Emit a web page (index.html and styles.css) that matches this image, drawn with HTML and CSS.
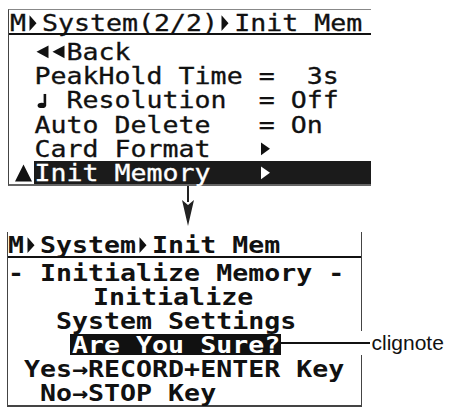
FILE: index.html
```html
<!DOCTYPE html>
<html>
<head>
<meta charset="utf-8">
<link rel="stylesheet" href="styles.css">
</head>
<body>
<div class="page">
  <div class="lcd lcd-top">
    <div class="hdr"><span class="t">M<svg class="g" viewBox="0 0 16 24"><polygon points="3.5,1 10.5,10 3.5,19"/></svg>System(2/2)<svg class="g" viewBox="0 0 16 24"><polygon points="3.5,1 10.5,10 3.5,19"/></svg>Init Mem</span></div>
    <div class="rows">
      <div class="row"><span class="cur"></span><span class="txt"><span class="t"><svg class="g" viewBox="0 0 16 24"><polygon points="1.5,9.7 13.5,2.5 13.5,17"/></svg><svg class="g" viewBox="0 0 16 24"><polygon points="1.5,9.7 13.5,2.5 13.5,17"/></svg>Back</span></span></div>
      <div class="row"><span class="cur"></span><span class="txt"><span class="t">PeakHold Time =  3s</span></span></div>
      <div class="row"><span class="cur"></span><span class="txt"><span class="t"><svg class="g" viewBox="0 0 16 24"><rect x="8.6" y="3" width="2.6" height="13.5"/><ellipse cx="6.8" cy="16" rx="4.2" ry="3"/></svg> Resolution  = Off</span></span></div>
      <div class="row"><span class="cur"></span><span class="txt"><span class="t">Auto Delete   = On</span></span></div>
      <div class="row"><span class="cur"></span><span class="txt"><span class="t">Card Format   <svg class="g" viewBox="0 0 16 24"><polygon points="2,2.5 11,9.7 2,17"/></svg></span></span></div>
      <div class="row sel"><span class="cur"><svg class="up" viewBox="0 0 18 18"><polygon points="9,0 18,18 0,18"/></svg></span><span class="txt"><span class="t">Init Memory   <svg class="g" viewBox="0 0 16 24"><polygon points="2,2.5 11,9.7 2,17"/></svg></span></span></div>
    </div>
  </div>
  <div class="arrow">
    <svg viewBox="0 0 12 44" width="12" height="44"><rect x="5" y="0" width="2" height="16"/><polygon points="0,14 6,40 12,14 6,19"/></svg>
  </div>
  <div class="lcd lcd-bot">
    <div class="hdr"><span class="t">M<svg class="g" viewBox="0 0 16 24"><polygon points="3.5,1 10.5,10 3.5,19"/></svg>System<svg class="g" viewBox="0 0 16 24"><polygon points="3.5,1 10.5,10 3.5,19"/></svg>Init Mem</span></div>
    <div class="rows">
      <div class="line"><span class="t">- Initialize Memory -</span></div>
      <div class="line nudge"><span class="t">     Initialize</span></div>
      <div class="line"><span class="t">   System Settings</span></div>
      <div class="line callrow"><span class="t">    </span><span class="hl"><span class="t">Are You Sure?</span></span><span class="callout"><span class="lead"></span><span class="note">clignote</span></span></div>
      <div class="line"><span class="t"> Yes→RECORD+ENTER Key</span></div>
      <div class="line"><span class="t">  No→STOP Key</span></div>
    </div>
  </div>
</div>
</body>
</html>
```
FILE: styles.css
```css
html, body {
  margin: 0;
  padding: 0;
  background: #ffffff;
}
.page {
  width: 451px;
  height: 409px;
  padding-top: 9px;
  box-sizing: border-box;
  overflow: hidden;
  position: relative;
}
.lcd {
  font-family: "DejaVu Sans Mono", monospace;
  font-size: 26.6px;
  letter-spacing: 0;
  color: #111;
}
.hdr, .txt, .line {
  white-space: pre;
}
.t {
  display: inline-block;
  vertical-align: top;
  transform: scaleY(0.88);
  transform-origin: 50% 50%;
}
.g {
  display: inline-block;
  width: 16px;
  height: 24px;
  vertical-align: -5px;
  fill: currentColor;
}
.lcd-top {
  margin-left: 8px;
  width: 362px;
  border-top: 1px solid #888;
  border-left: 1.5px solid #444;
  border-bottom: 2px solid #666;
  -webkit-text-stroke: 0.35px #111;
}
.lcd-top .hdr {
  padding: 2px 0 0 1px;
  line-height: 21px;
  height: 21px;
  border-bottom: 2.5px solid #111;
}
.lcd-top .rows {
  padding-top: 4.5px;
}
.row {
  display: flex;
  height: 24.4px;
  line-height: 24.4px;
}
.cur {
  width: 24.5px;
  flex: none;
  display: flex;
  align-items: center;
  justify-content: center;
}
.up {
  width: 17px;
  height: 18px;
  fill: #111;
  margin-left: 5px;
}
.txt {
  flex: 1;
  padding-left: 1px;
}
.row.sel {
  height: 22.4px;
}
.row.sel .txt {
  background: #1b1b1b;
  color: #fff;
  -webkit-text-stroke: 0.35px #fff;
}
.arrow {
  height: 46px;
  padding-left: 182px;
  box-sizing: border-box;
  line-height: 0;
}
.arrow svg {
  fill: #222;
  display: block;
}
.lcd-bot {
  margin-left: 7px;
  width: 355px;
  box-sizing: border-box;
  border-left: 1.5px solid #444;
  border-right: 1.5px solid #444;
  border-bottom: 2px solid #444;
  font-weight: bold;
}
.lcd-bot .hdr {
  padding: 2px 0 0 0;
  line-height: 22px;
  height: 22px;
  border-bottom: 2.5px solid #111;
}
.lcd-bot .rows {
  padding-top: 3.5px;
}
.line {
  height: 24px;
  line-height: 24px;
}
.line.nudge {
  padding-left: 5px;
}
.callrow {
  position: relative;
}
.hl {
  display: inline-block;
  vertical-align: top;
  height: 21px;
  line-height: 22px;
  margin-top: 1px;
  margin-left: -2.5px;
  padding: 0 0.5px 0 2.5px;
  background: #111;
  color: #fff;
}
.callout {
  position: absolute;
  left: 272.5px;
  top: -2px;
  height: 24px;
  display: flex;
  align-items: center;
  white-space: nowrap;
  background: #fff;
}
.lead {
  width: 89px;
  height: 2px;
  background: #111;
}
.note {
  font-family: "Liberation Sans", Arial, sans-serif;
  font-weight: normal;
  font-size: 21px;
  letter-spacing: 0;
  color: #111;
  margin-left: 2px;
  line-height: 24px;
}
```
